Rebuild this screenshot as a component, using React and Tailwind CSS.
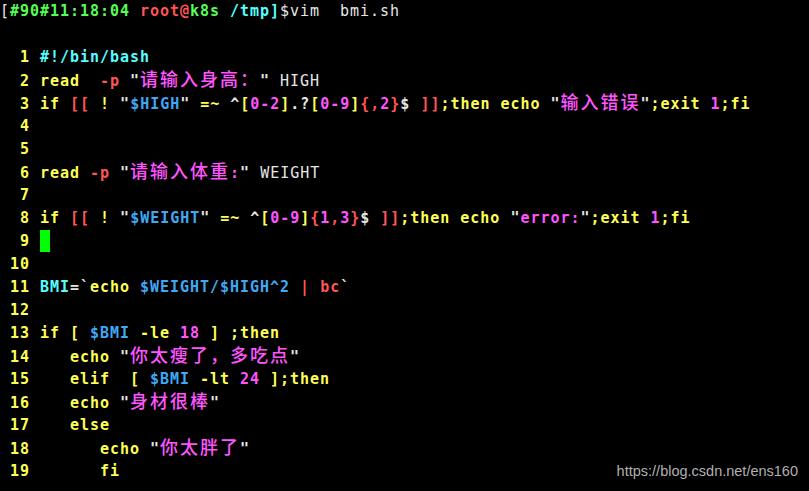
const Y = 'text-[#ffff55]';
const R = 'text-[#ff5555]';
const M = 'text-[#ff55ff]';
const C = 'text-[#55ffff]';
const B = 'text-[#3fa9f5]';
const G = 'text-[#55ff55]';
const W = 'text-[#e6e6e6]';
const WN = 'text-[#e6e6e6] font-normal';

const title = [
  ['[', WN], ['#90#11:18:04', G], [' root@', R], ['k8s', G], [' /tmp]', C], ['$', WN], ['vim  bmi.sh', WN],
];

// [text, colour, isCjk]
const code = [
  [['#!/bin/bash', C]],
  [['read', Y], ['  ', W], ['-p', R], [' ', W], ['"', W], ['请输入身高：', M, 1], ['"', W], [' HIGH', WN]],
  [
    ['if', Y], [' ', W], ['[[', R], [' ', W], ['!', Y], [' ', W], ['"', W], ['$HIGH', B], ['"', W], [' ', W],
    ['=~', Y], [' ^', W], ['[', Y], ['0-2', M], [']', Y], ['.?', W], ['[', Y], ['0-9', M], [']', Y],
    ['{,', R], ['2', M], ['}', R], ['$ ', W], [']]', R], [';then echo ', Y], ['"', W], ['输入错误', M, 1],
    ['"', W], [';exit ', Y], ['1', M], [';fi', Y],
  ],
  [],
  [],
  [['read', Y], [' ', W], ['-p', R], [' ', W], ['"', W], ['请输入体重', M, 1], [':', M], ['"', W], [' WEIGHT', WN]],
  [],
  [
    ['if', Y], [' ', W], ['[[', R], [' ', W], ['!', Y], [' ', W], ['"', W], ['$WEIGHT', B], ['"', W], [' ', W],
    ['=~', Y], [' ^', W], ['[', Y], ['0-9', M], [']', Y], ['{', R], ['1', M], [',', R], ['3', M], ['}', R],
    ['$ ', W], [']]', R], [';then echo ', Y], ['"', W], ['error:', M], ['"', W], [';exit ', Y], ['1', M], [';fi', Y],
  ],
  'cursor',
  [],
  [['BMI', C], ['=`', W], ['echo', Y], [' ', W], ['$WEIGHT/$HIGH^2', B], [' ', W], ['|', R], [' ', W], ['bc', R], ['`', W]],
  [],
  [['if [ ', Y], ['$BMI', B], [' -le ', Y], ['18', M], [' ] ;then', Y]],
  [['   echo ', Y], ['"', W], ['你太瘦了，多吃点', M, 1], ['"', W]],
  [['   elif  [ ', Y], ['$BMI', B], [' -lt ', Y], ['24', M], [' ];then', Y]],
  [['   echo ', Y], ['"', W], ['身材很棒', M, 1], ['"', W]],
  [['   else', Y]],
  [['      echo ', Y], ['"', W], ['你太胖了', M, 1], ['"', W]],
  [['      fi', Y]],
];

function Seg({ text, cls, cjk }) {
  if (cjk) {
    return (
      <span className={`${cls} font-['Noto_Sans_CJK_SC',sans-serif] text-[18px] leading-none tracking-[2px] font-medium`}>
        {text}
      </span>
    );
  }
  return <span className={cls}>{text}</span>;
}

function Row({ children }) {
  return <div className="h-[23px] leading-[23px] whitespace-pre">{children}</div>;
}

export default function App() {
  return (
    <div className="relative w-[809px] h-[491px] bg-black overflow-hidden font-['DejaVu_Sans_Mono',monospace] text-[15px] tracking-[0.97px] font-bold">
      <Row>
        {title.map(([t, c], i) => (
          <Seg key={i} text={t} cls={c} />
        ))}
      </Row>
      <Row> </Row>
      {code.map((line, n) => (
        <Row key={n}>
          <span className={Y}>{String(n + 1).padStart(3, ' ') + ' '}</span>
          {line === 'cursor' ? (
            <span className="inline-block w-[10px] h-[22px] align-top bg-[#00ff00]" />
          ) : (
            line.map(([t, c, k], i) => <Seg key={i} text={t} cls={c} cjk={k} />)
          )}
        </Row>
      ))}

      {/* watermark */}
      <div className="absolute right-[11px] bottom-[12px] font-['Liberation_Sans',Arial,sans-serif] font-normal tracking-normal text-[14.5px] leading-[16px] text-[#b0b0b0]">
        https://blog.csdn.net/ens160
      </div>
    </div>
  );
}
